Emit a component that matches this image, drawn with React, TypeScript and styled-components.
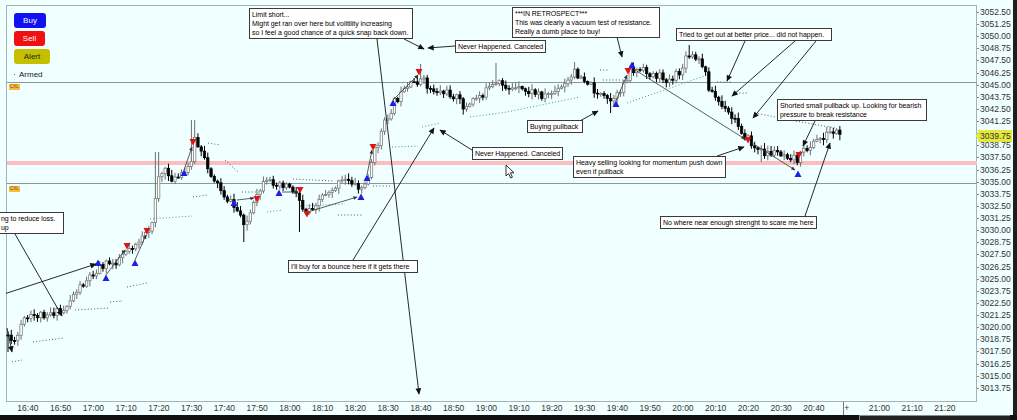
import React from 'react';
import styled, { createGlobalStyle } from 'styled-components';

const GlobalStyle = createGlobalStyle`
	body {
		margin: 0;
		font-family: "Liberation Sans", Arial, sans-serif;
	}
`;

const Screen = styled.div`
	width: 1017px;
	height: 420px;
	overflow: hidden;
	background: #f0ffff;
	display: grid;
	grid-template-columns: 6px 971px 36px 4px;
	grid-template-rows: 5px 397px 13px 5px;
	font-family: "Liberation Sans", Arial, sans-serif;
`;

const Plot = styled.div`
	grid-column: 2;
	grid-row: 2;
	position: relative;
`;

const ChartSvg = styled.svg`
	display: block;
`;

const Note = styled.div<{ $x: number; $y: number; $w: number }>`
	position: absolute;
	left: ${(p) => p.$x - 6}px;
	top: ${(p) => p.$y - 5}px;
	min-width: ${(p) => p.$w}px;
	box-sizing: border-box;
	padding: 1px 2px;
	background: #fff;
	border: 1px solid #3a3a3a;
	color: #000;
	font-size: 7px;
	line-height: 9px;
	letter-spacing: -0.05px;
	white-space: nowrap;
`;

const ButtonStack = styled.div`
	position: absolute;
	left: 8px;
	top: 8px;
	display: flex;
	flex-direction: column;
	align-items: flex-start;
	gap: 3px;
`;

const OrderButton = styled.div<{ $bg: string; $fg: string; $w: number }>`
	width: ${(p) => p.$w}px;
	height: 15px;
	border-radius: 3px;
	background: ${(p) => p.$bg};
	color: ${(p) => p.$fg};
	font-size: 8px;
	display: flex;
	align-items: center;
	justify-content: center;
`;

const Armed = styled.div`
	margin-top: 3px;
	display: flex;
	align-items: center;
	gap: 4px;
	font-size: 8px;
	line-height: 9px;
	color: #222;
	&::before {
		content: '';
		width: 1px;
		height: 1px;
		background: #666;
	}
`;

const CxlTag = styled.div<{ $y: number }>`
	position: absolute;
	left: 3px;
	top: ${(p) => p.$y - 5}px;
	width: 11px;
	height: 6px;
	background: #f2c040;
	color: #9a3a00;
	font-size: 4.5px;
	line-height: 6px;
	text-align: center;
`;

const PriceAxis = styled.div`
	grid-column: 3;
	grid-row: 2;
	position: relative;
	padding-top: 0.9px;
	display: flex;
	flex-direction: column;
`;

const PriceLabel = styled.div`
	height: 12.13px;
	line-height: 12.13px;
	font-size: 8.5px;
	color: #333;
	padding-left: 3px;
	position: relative;
	&::before {
		content: '';
		position: absolute;
		left: 0;
		top: 6px;
		width: 2px;
		height: 1px;
		background: #888;
	}
`;

const PriceTag = styled.div<{ $y: number }>`
	position: absolute;
	left: 1px;
	top: ${(p) => p.$y - 5 - 6}px;
	height: 12px;
	line-height: 12px;
	padding: 0 1px 0 2px;
	background: #e4e83a;
	color: #333;
	font-size: 8.5px;
	&::before {
		content: '';
		position: absolute;
		left: -3px;
		top: 3px;
		border-top: 3px solid transparent;
		border-bottom: 3px solid transparent;
		border-right: 3px solid #e4e83a;
	}
`;

const EdgeStrip = styled.div`
	grid-column: 4;
	grid-row: 1 / 4;
	background: #1e1e1e;
`;

const TimeAxis = styled.div`
	grid-column: 1 / 4;
	grid-row: 3;
	display: flex;
	padding-left: 11.6px;
`;

const TimeSlot = styled.div<{ $now?: boolean }>`
	flex: none;
	width: 32.75px;
	text-align: center;
	font-size: 8.5px;
	line-height: 13px;
	color: #333;
	position: relative;
	&::before {
		content: '';
		display: ${(p) => (p.$now ? 'block' : 'none')};
		position: absolute;
		left: 12.6px;
		top: 0;
		width: 1px;
		height: 13px;
		background: #777;
	}
`;

const ScrollBar = styled.div`
	grid-column: 1 / -1;
	grid-row: 4;
	background: #111;
	display: flex;
	justify-content: flex-end;
`;

const ScrollThumb = styled.div`
	width: 150px;
	margin-right: 7px;
	border-top: 1px solid #8c8c8c;
	border-left: 1px solid #8c8c8c;
	background: #222;
`;

// seeded random so the bars stay put between renders
const mulberry32 = (seed: number) => () => {
	seed |= 0;
	seed = (seed + 0x6d2b79f5) | 0;
	let t = Math.imul(seed ^ (seed >>> 15), 1 | seed);
	t = (t + Math.imul(t ^ (t >>> 7), 61 | t)) ^ t;
	return ((t ^ (t >>> 14)) >>> 0) / 4294967296;
};

const PATH: [number, number][] = [
	[8, 335], [15, 345], [22, 322], [35, 316], [50, 312], [62, 313], [75, 292], [90, 276],
	[100, 266], [115, 262], [125, 250], [140, 240], [150, 233], [153, 215], [156, 190], [158, 176],
	[165, 172], [175, 180], [183, 176], [190, 165], [195, 138], [200, 152], [210, 172],
	[225, 196], [240, 214], [246, 224], [252, 210], [262, 186], [275, 181], [290, 186],
	[298, 196], [305, 212], [312, 206], [325, 193], [340, 183], [350, 179], [358, 189],
	[365, 186], [372, 160], [380, 136], [388, 116], [395, 101], [405, 92], [415, 82],
	[422, 80], [430, 89], [445, 93], [455, 95], [462, 105], [468, 108], [475, 98],
	[490, 89], [500, 84], [515, 90], [530, 92], [545, 95], [560, 90], [570, 80], [575, 72],
	[585, 79], [595, 90], [605, 100], [615, 102], [622, 86], [630, 70], [640, 71],
	[655, 75], [670, 80], [680, 73], [688, 56], [695, 59], [703, 66], [710, 90],
	[718, 101], [725, 111], [735, 121], [745, 135], [752, 145], [760, 152], [770, 153],
	[780, 152], [790, 155], [798, 159], [805, 150], [815, 142], [825, 135], [832, 131],
	[842, 133],
];

const SPIKES: Record<number, { hi?: number; lo?: number }> = {
	9: { lo: 352 },
	157: { hi: 152 },
	193: { hi: 120 },
	245: { lo: 242 },
	300: { lo: 232 },
	420: { hi: 64 },
	497: { hi: 63 },
	575: { hi: 62 },
	612: { lo: 113 },
	690: { hi: 45 },
	760: { lo: 162 },
};

const baseAt = (x: number) => {
	for (let i = 1; i < PATH.length; i++) {
		const [x1, y1] = PATH[i];
		const [x0, y0] = PATH[i - 1];
		if (x <= x1) return y0 + ((y1 - y0) * (x - x0)) / (x1 - x0);
	}
	return PATH[PATH.length - 1][1];
};

type Bar = { x: number; o: number; c: number; hi: number; lo: number };

const makeBars = (): Bar[] => {
	const rnd = mulberry32(11);
	const bars: Bar[] = [];
	let prev = baseAt(8);
	for (let x = 8; x <= 842; x += 3.275) {
		const o = prev;
		const c = baseAt(x) + (rnd() - 0.5) * 9;
		let hi = Math.min(o, c) - 1 - rnd() * 5;
		let lo = Math.max(o, c) + 1 + rnd() * 5;
		const key = Object.keys(SPIKES).find((k) => Math.abs(Number(k) - x) < 1.7);
		if (key) {
			hi = SPIKES[Number(key)].hi ?? hi;
			lo = SPIKES[Number(key)].lo ?? lo;
		}
		bars.push({ x, o, c, hi, lo });
		prev = c;
	}
	return bars;
};

const BARS = makeBars();

const DOTS: { color: string; pts: [number, number][] }[] = [
	{ color: '#555', pts: [[12, 362], [22, 360]] },
	{ color: '#555', pts: [[33, 342], [63, 338]] },
	{ color: '#555', pts: [[75, 310], [110, 308]] },
	{ color: '#555', pts: [[110, 302], [123, 301]] },
	{ color: '#555', pts: [[127, 287], [147, 283]] },
	{ color: '#3a9a8a', pts: [[150, 219], [192, 216]] },
	{ color: '#555', pts: [[193, 197], [207, 195]] },
	{ color: '#555', pts: [[208, 143], [220, 145]] },
	{ color: '#555', pts: [[225, 160], [238, 172]] },
	{ color: '#555', pts: [[242, 192], [257, 192]] },
	{ color: '#3a9a8a', pts: [[267, 212], [283, 210]] },
	{ color: '#555', pts: [[293, 179], [333, 181]] },
	{ color: '#3a9a8a', pts: [[300, 206], [345, 204]] },
	{ color: '#555', pts: [[338, 215], [363, 215]] },
	{ color: '#555', pts: [[373, 186], [390, 186]] },
	{ color: '#3a9a8a', pts: [[392, 147], [418, 146]] },
	{ color: '#3a9a8a', pts: [[422, 127], [440, 123]] },
	{ color: '#3a9a8a', pts: [[470, 117], [507, 112], [580, 97]] },
	{ color: '#3a9a8a', pts: [[627, 103], [673, 87], [707, 75]] },
	{ color: '#555', pts: [[600, 70], [608, 70]] },
	{ color: '#555', pts: [[603, 80], [627, 80]] },
	{ color: '#555', pts: [[717, 82], [733, 82]] },
	{ color: '#555', pts: [[733, 93], [747, 93]] },
	{ color: '#555', pts: [[755, 113], [790, 120], [835, 128]] },
];

type Seg = [number, number, number, number];

const NOTE_ARROWS: Seg[] = [
	[377, 39, 419, 394],
	[404, 39, 424, 49],
	[455, 46, 428, 48],
	[617, 37, 622, 57],
	[745, 41, 727, 81],
	[795, 41, 732, 96],
	[816, 41, 753, 118],
	[578, 122, 598, 111],
	[472, 150, 440, 130],
	[353, 260, 434, 128],
	[717, 156, 744, 147],
	[815, 121, 803, 146],
	[805, 216, 830, 143],
	[15, 234, 62, 316],
	[-2, 296, 96, 264],
	[7, 328, 12, 352],
];

const TRADE_LINKS: Seg[] = [
	[106, 275, 125, 250],
	[135, 260, 146, 235],
	[184, 170, 192, 147],
	[237, 200, 254, 198],
	[282, 192, 298, 192],
	[311, 211, 357, 197],
	[367, 175, 372, 150],
	[393, 100, 418, 75],
	[616, 101, 627, 75],
	[632, 68, 745, 139],
	[752, 143, 795, 170],
];

const MARKS: { x: number; y: number; up: boolean }[] = [
	{ x: 98, y: 263, up: true },
	{ x: 106, y: 278, up: true },
	{ x: 127, y: 246, up: false },
	{ x: 135, y: 263, up: true },
	{ x: 147, y: 231, up: false },
	{ x: 184, y: 173, up: true },
	{ x: 193, y: 142, up: false },
	{ x: 234, y: 203, up: true },
	{ x: 257, y: 199, up: false },
	{ x: 279, y: 193, up: true },
	{ x: 300, y: 190, up: false },
	{ x: 307, y: 214, up: false },
	{ x: 361, y: 197, up: true },
	{ x: 367, y: 178, up: true },
	{ x: 373, y: 147, up: false },
	{ x: 393, y: 103, up: true },
	{ x: 419, y: 72, up: false },
	{ x: 616, y: 104, up: true },
	{ x: 628, y: 71, up: false },
	{ x: 632, y: 65, up: true },
	{ x: 748, y: 140, up: false },
	{ x: 799, y: 155, up: false },
	{ x: 798, y: 174, up: true },
];

const LAST = 3039.75;
const PRICES = Array.from({ length: 32 }, (_, i) => 3052.5 - i * 1.25);
const TIMES = [
	'16:40', '16:50', '17:00', '17:10', '17:20', '17:30', '17:40', '17:50', '18:00', '18:10',
	'18:20', '18:30', '18:40', '18:50', '19:00', '19:10', '19:20', '19:30', '19:40', '19:50',
	'20:00', '20:10', '20:20', '20:30', '20:40', '+', '21:00', '21:10', '21:20',
];

const priceY = (p: number) => 12 + (3052.5 - p) * 9.704;

const Chart: React.FC = () => (
	<ChartSvg width={971} height={397} viewBox="6 5 971 397">
		<defs>
			<marker id="head" viewBox="0 0 10 10" refX="9" refY="5" markerWidth="8" markerHeight="7" orient="auto">
				<path d="M0,0.5 L10,5 L0,9.5 z" fill="#111" />
			</marker>
			<marker id="tip" viewBox="0 0 10 10" refX="9" refY="5" markerWidth="6" markerHeight="5" orient="auto">
				<path d="M0,0.5 L10,5 L0,9.5 z" fill="#333" />
			</marker>
		</defs>
		<rect x={6.5} y={5.5} width={970} height={396} fill="none" stroke="#a6b2b2" />
		<line x1={7} x2={977} y1={82.5} y2={82.5} stroke="#8a9898" />
		<line x1={7} x2={977} y1={183.5} y2={183.5} stroke="#8a9898" />
		<rect x={7} y={161} width={970} height={4} fill="#ffbcbc" />

		{DOTS.map((d, i) => (
			<polyline
				key={i}
				points={d.pts.map((p) => p.join(',')).join(' ')}
				fill="none"
				stroke={d.color}
				strokeWidth={1}
				strokeDasharray="1 2.2"
			/>
		))}

		{BARS.map((b, i) => {
			const up = b.c < b.o;
			const top = Math.min(b.o, b.c);
			const h = Math.max(1, Math.abs(b.c - b.o));
			return (
				<g key={i}>
					<line x1={b.x} x2={b.x} y1={b.hi} y2={b.lo} stroke={up ? '#6e6e6e' : '#000'} strokeWidth={1} />
					<rect
						x={b.x - 1.2}
						y={top}
						width={2.4}
						height={h}
						fill={up ? '#fff' : '#000'}
						stroke={up ? '#6e6e6e' : '#000'}
						strokeWidth={0.7}
					/>
				</g>
			);
		})}

		{TRADE_LINKS.map(([x1, y1, x2, y2], i) => (
			<line key={i} x1={x1} y1={y1} x2={x2} y2={y2} stroke="#333" strokeWidth={0.8} markerEnd="url(#tip)" />
		))}

		{MARKS.map((m, i) => (
			<polygon
				key={i}
				points={
					m.up
						? `${m.x - 3.5},${m.y + 3} ${m.x + 3.5},${m.y + 3} ${m.x},${m.y - 3.5}`
						: `${m.x - 3.5},${m.y - 3} ${m.x + 3.5},${m.y - 3} ${m.x},${m.y + 3.5}`
				}
				fill={m.up ? '#1e1ee8' : '#e01414'}
			/>
		))}

		{NOTE_ARROWS.map(([x1, y1, x2, y2], i) => (
			<line key={i} x1={x1} y1={y1} x2={x2} y2={y2} stroke="#111" strokeWidth={0.9} markerEnd="url(#head)" />
		))}

		<path
			d="M506 165 L506 176 L508.6 173.5 L510.6 178 L512.4 177.2 L510.4 172.8 L514 172.8 Z"
			fill="#fff"
			stroke="#000"
			strokeWidth={0.8}
		/>
	</ChartSvg>
);

export default function App() {
	return (
		<>
			<GlobalStyle />
			<Screen>
				<Plot>
					<Chart />
					<ButtonStack>
						<OrderButton $bg="#1010f0" $fg="#fff" $w={32}>Buy</OrderButton>
						<OrderButton $bg="#f01010" $fg="#fff" $w={31}>Sell</OrderButton>
						<OrderButton $bg="#c4c000" $fg="#222" $w={36}>Alert</OrderButton>
						<Armed>Armed</Armed>
					</ButtonStack>
					<CxlTag $y={84}>CXL</CxlTag>
					<CxlTag $y={186}>CXL</CxlTag>

					<Note $x={249} $y={8} $w={164}>
						Limit short...
						<br />
						Might get ran over here but volitility increasing
						<br />
						so I feel a good chance of a quick snap back down.
					</Note>
					<Note $x={455} $y={40} $w={82}>Never Happened. Canceled</Note>
					<Note $x={512} $y={7} $w={148}>
						***IN RETROSPECT***
						<br />
						This was clearly a vacuum test of resistance.
						<br />
						Really a dumb place to buy!
					</Note>
					<Note $x={676} $y={28} $w={156}>Tried to get out at better price... did not happen.</Note>
					<Note $x={527} $y={120} $w={56}>Buying pullback</Note>
					<Note $x={472} $y={147} $w={90}>Never Happened. Canceled</Note>
					<Note $x={573} $y={156} $w={153}>
						Heavy selling looking for momentum push down
						<br />
						even if pullback
					</Note>
					<Note $x={777} $y={99} $w={150}>
						Shorted small pullback up. Looking for bearish
						<br />
						pressure to break resistance
					</Note>
					<Note $x={660} $y={216} $w={157}>No where near enough strenght to scare me here</Note>
					<Note $x={288} $y={260} $w={130}>I'll buy for a bounce here if it gets there</Note>
					<Note $x={-2} $y={212} $w={66}>
						ng to reduce loss.
						<br />
						up
					</Note>
				</Plot>

				<PriceAxis>
					{PRICES.map((p) => (
						<PriceLabel key={p}>{Math.abs(p - LAST) < 1 ? '' : p.toFixed(2)}</PriceLabel>
					))}
					<PriceTag $y={priceY(LAST)}>{LAST.toFixed(2)}</PriceTag>
				</PriceAxis>

				<EdgeStrip />

				<TimeAxis>
					{TIMES.map((t) => (
						<TimeSlot key={t} $now={t === '+'}>
							{t}
						</TimeSlot>
					))}
				</TimeAxis>

				<ScrollBar>
					<ScrollThumb />
				</ScrollBar>
			</Screen>
		</>
	);
}
